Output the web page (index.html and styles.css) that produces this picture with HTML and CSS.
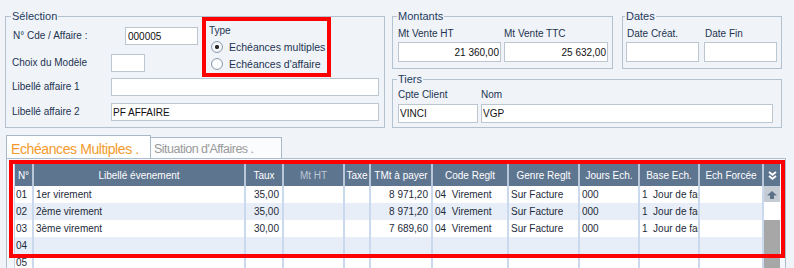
FILE: index.html
```html
<!DOCTYPE html>
<html lang="fr">
<head>
    <meta charset="UTF-8">
    <meta name="viewport" content="width=device-width, initial-scale=1.0">
    <title>Echéances Multiples</title>
    <link rel="stylesheet" href="styles.css">
</head>
<body>
    <div class="top">
        <!-- Sélection -->
        <fieldset class="group sel">
            <legend>Sélection</legend>
            <div class="sel-top">
                <div class="sel-left">
                    <div class="row row-cde">
                        <label>N° Cde / Affaire :</label>
                        <input class="inp inp-cde" value="000005">
                    </div>
                    <div class="row row-modele">
                        <label>Choix du Modèle</label>
                        <input class="inp inp-modele" value="">
                    </div>
                </div>
                <div class="type-box">
                    <div class="type-title">Type</div>
                    <div class="radio checked"><span class="dot"></span>Echéances multiples</div>
                    <div class="radio"><span class="dot"></span>Echéances d'affaire</div>
                </div>
            </div>
            <div class="row row-lib1">
                <label>Libellé affaire 1</label>
                <input class="inp inp-lib" value="">
            </div>
            <div class="row row-lib2">
                <label>Libellé affaire 2</label>
                <input class="inp inp-lib" value="PF AFFAIRE">
            </div>
        </fieldset>

        <div class="right">
            <div class="right-top">
                <!-- Montants -->
                <fieldset class="group montants">
                    <legend>Montants</legend>
                    <div class="pair">
                        <div class="cell">
                            <label>Mt Vente HT</label>
                            <input class="inp num w-ht" value="21 360,00">
                        </div>
                        <div class="cell">
                            <label>Mt Vente TTC</label>
                            <input class="inp num w-ttc" value="25 632,00">
                        </div>
                    </div>
                </fieldset>

                <!-- Dates -->
                <fieldset class="group dates">
                    <legend>Dates</legend>
                    <div class="pair">
                        <div class="cell">
                            <label>Date Créat.</label>
                            <input class="inp w-date" value="">
                        </div>
                        <div class="cell">
                            <label>Date Fin</label>
                            <input class="inp w-date" value="">
                        </div>
                    </div>
                </fieldset>
            </div>

            <!-- Tiers -->
            <fieldset class="group tiers">
                <legend>Tiers</legend>
                <div class="pair">
                    <div class="cell">
                        <label>Cpte Client</label>
                        <input class="inp w-cpte" value="VINCI">
                    </div>
                    <div class="cell">
                        <label>Nom</label>
                        <input class="inp w-nom" value="VGP">
                    </div>
                </div>
            </fieldset>
        </div>
    </div>

    <!-- Onglets -->
    <div class="tabs">
        <div class="tab active">Echéances Multiples .</div>
        <div class="tab">Situation d'Affaires .</div>
    </div>

    <div class="panel">
        <table class="grid">
            <colgroup>
                <col style="width:19px">
                <col style="width:212px">
                <col style="width:38px">
                <col style="width:61px">
                <col style="width:26px">
                <col style="width:62px">
                <col style="width:76px">
                <col style="width:71px">
                <col style="width:60px">
                <col style="width:60px">
                <col style="width:64px">
                <col style="width:16px">
            </colgroup>
            <thead>
                <tr>
                    <th>N°</th>
                    <th>Libellé évenement</th>
                    <th>Taux</th>
                    <th class="dim">Mt HT</th>
                    <th>Taxe</th>
                    <th>TMt à payer</th>
                    <th>Code Reglt</th>
                    <th>Genre Reglt</th>
                    <th>Jours Ech.</th>
                    <th>Base Ech.</th>
                    <th>Ech Forcée</th>
                    <th class="sb-head">
                        <svg width="9" height="9" viewBox="0 0 9 9">
                            <path d="M1 1 L4.5 3.8 L8 1 M1 5 L4.5 7.8 L8 5" fill="none" stroke="#fff" stroke-width="1.8"/>
                        </svg>
                    </th>
                </tr>
            </thead>
            <tbody>
                <tr>
                    <td>01</td>
                    <td>1er virement</td>
                    <td class="r">35,00</td>
                    <td></td>
                    <td></td>
                    <td class="r">8 971,20</td>
                    <td class="pre">04  Virement</td>
                    <td>Sur Facture</td>
                    <td>000</td>
                    <td class="pre">1  Jour de facture</td>
                    <td></td>
                    <td class="sb" rowspan="5">
                        <div class="sb-btn">
                            <svg width="10" height="8" viewBox="0 0 10 8">
                                <path d="M5 0 L10 4.5 L7 4.5 L7 8 L3 8 L3 4.5 L0 4.5 Z" fill="#5b7189"/>
                            </svg>
                        </div>
                        <div class="sb-thumb"></div>
                    </td>
                </tr>
                <tr>
                    <td>02</td>
                    <td>2ème virement</td>
                    <td class="r">35,00</td>
                    <td></td>
                    <td></td>
                    <td class="r">8 971,20</td>
                    <td class="pre">04  Virement</td>
                    <td>Sur Facture</td>
                    <td>000</td>
                    <td class="pre">1  Jour de facture</td>
                    <td></td>
                </tr>
                <tr>
                    <td>03</td>
                    <td>3ème virement</td>
                    <td class="r">30,00</td>
                    <td></td>
                    <td></td>
                    <td class="r">7 689,60</td>
                    <td class="pre">04  Virement</td>
                    <td>Sur Facture</td>
                    <td>000</td>
                    <td class="pre">1  Jour de facture</td>
                    <td></td>
                </tr>
                <tr>
                    <td>04</td>
                    <td></td><td></td><td></td><td></td><td></td>
                    <td></td><td></td><td></td><td></td><td></td>
                </tr>
                <tr>
                    <td>05</td>
                    <td></td><td></td><td></td><td></td><td></td>
                    <td></td><td></td><td></td><td></td><td></td>
                </tr>
            </tbody>
        </table>
        <!-- cadre rouge par-dessus la grille -->
        <div class="mark"></div>
    </div>
</body>
</html>
```

FILE: styles.css
```css
* {
    margin: 0;
    padding: 0;
    box-sizing: border-box;
}

html,
body {
    height: 268px;
    overflow: hidden;
}

body {
    background-color: #f0f4f9;
    font-family: "Liberation Sans", Arial, sans-serif;
    font-size: 10px;
    color: #1d3350;
}

/* Zone du haut */
.top {
    display: flex;
    gap: 7px;
    padding: 9px 0 0 5px;
}

.group {
    border: 1px solid #b4c2d0;
    padding: 0 5px 6px 6px;
}

.group legend {
    font-size: 11px;
    line-height: 14px;
    padding: 0 1px;
    margin-left: -1px;
    color: #1f3b60;
}

label {
    display: block;
    line-height: 12px;
    white-space: nowrap;
}

.inp {
    display: block;
    height: 18px;
    border: 1px solid #bcc6d0;
    background: #fff;
    font-family: "Liberation Sans", Arial, sans-serif;
    font-size: 10px;
    color: #111;
    padding: 0 2px;
    outline: none;
}

.inp.num {
    text-align: right;
    padding-right: 1px;
}

/* Sélection */
.sel {
    width: 380px;
}

.sel-top {
    display: flex;
    align-items: flex-start;
}

.sel-left {
    width: 186px;
}

.row {
    display: flex;
    align-items: center;
}

.row label {
    width: 99px;
    flex: none;
}

.row-cde {
    margin-top: 4px;
}

.row-cde label {
    padding-left: 1px;
}

.row-modele {
    margin-top: 9px;
}

.inp-cde {
    width: 73px;
    margin-left: 14px;
}

.inp-modele {
    width: 34px;
}

.inp-lib {
    width: 268px;
    padding-left: 1px;
}

.row-lib1 {
    margin-top: 1px;
}

.row-lib2 {
    margin-top: 7px;
}

.type-box {
    width: 129px;
    height: 60px;
    margin: -6px 0 0 4px;
    border: 4px solid #f00;
    padding-top: 4px;
}

.type-title {
    line-height: 12px;
    padding-left: 3px;
}

.radio {
    display: flex;
    align-items: center;
    height: 17px;
    padding-left: 5px;
    font-size: 10.5px;
}

.radio.checked {
    margin-top: 1px;
}

.dot {
    width: 12px;
    height: 12px;
    margin-right: 6px;
    border: 1px solid #8d9cad;
    border-radius: 50%;
    background: radial-gradient(circle, #fff 40%, #e6eaef 100%);
}

.radio.checked .dot {
    background: radial-gradient(circle, #2c2c2c 0 1.8px, #fafbfc 2.4px, #e6eaef 100%);
}

/* Colonne de droite */
.right {
    width: 390px;
}

.right-top {
    display: flex;
    gap: 9px;
}

.pair {
    display: flex;
}

.cell label {
    margin-top: 5px;
}

.cell .inp {
    margin-top: 2px;
    height: 20px;
}

.montants {
    width: 221px;
    padding: 0 3px 6px 5px;
}

.montants .pair {
    gap: 3px;
}

.w-ht {
    width: 103px;
}

.w-ttc {
    width: 104px;
}

.dates {
    width: 160px;
    padding: 0 4px 6px 3px;
}

.dates .pair {
    gap: 5px;
}

.dates label {
    padding-left: 1px;
}

.w-date {
    width: 73px;
}

.tiers {
    margin-top: 3px;
    padding: 0 5px 4px 5px;
}

.tiers .pair {
    gap: 3px;
}

.tiers .cell label {
    margin-top: 3px;
}

.tiers .cell .inp {
    margin-top: 3px;
    height: 19px;
    padding-left: 1px;
}

.w-cpte {
    width: 80px;
}

.w-nom {
    width: 292px;
}

/* Onglets */
.tabs {
    display: flex;
    align-items: flex-end;
    margin: 7px 0 0 6px;
}

.tab {
    background: #fbfcfd;
    border: 1px solid #a9b8c8;
    border-bottom: none;
    border-left: none;
    white-space: nowrap;
}

.tab.active {
    width: 145px;
    height: 23px;
    border-left: 1px solid #a9b8c8;
    background: #fff;
    color: #f39a2b;
    font-size: 14px;
    letter-spacing: -0.4px;
    line-height: 18px;
    padding: 4px 0 0 4px;
}

.tab:not(.active) {
    width: 131px;
    height: 21px;
    color: #9a9a9a;
    font-size: 12.5px;
    letter-spacing: -0.5px;
    line-height: 17px;
    padding: 3px 0 0 3px;
}

/* Panneau de la grille */
.panel {
    position: relative;
    width: 780px;
    height: 140px;
    margin-left: 6px;
    border: 1px solid #aebdcc;
    background: #f4f7fb;
    padding: 5px 0 0 7px;
}

.grid {
    width: 765px;
    table-layout: fixed;
    border-collapse: separate;
    border-spacing: 0;
    border-left: 1px solid #c5d5ea;
}

.grid th {
    height: 22px;
    background: #5e7590;
    color: #fff;
    font-weight: normal;
    font-size: 10px;
    text-align: center;
    white-space: nowrap;
    overflow: hidden;
    border-right: 2px solid #b7c6d9;
}

.grid th.dim {
    color: #bcc7d3;
}

.grid th.sb-head {
    border-right: none;
    padding-top: 2px;
}

.grid td {
    height: 17px;
    padding: 0 2px;
    white-space: nowrap;
    overflow: hidden;
    color: #1d2b3a;
    border-right: 2px solid #cad9ee;
}

.grid td:first-child {
    padding-left: 1px;
}

.grid td.r {
    text-align: right;
    padding-right: 3px;
}

.grid td.pre {
    white-space: pre;
}

.grid tbody tr:nth-child(odd) td {
    background: #fff;
}

.grid tbody tr:nth-child(even) td {
    background: #e8eef7;
}

/* Barre de défilement */
.grid tbody tr td.sb {
    padding: 0;
    vertical-align: top;
    background: #a7a7a7;
    border-right: none;
}

.sb-btn {
    height: 16px;
    background: #c6ccd3;
    display: flex;
    justify-content: center;
    padding-top: 5px;
}

.sb-thumb {
    height: 18px;
    background: #fff;
}

/* Cadre rouge */
.mark {
    position: absolute;
    left: 2px;
    top: 1px;
    width: 776px;
    height: 98px;
    border: 4px solid #f00;
    pointer-events: none;
}
```
